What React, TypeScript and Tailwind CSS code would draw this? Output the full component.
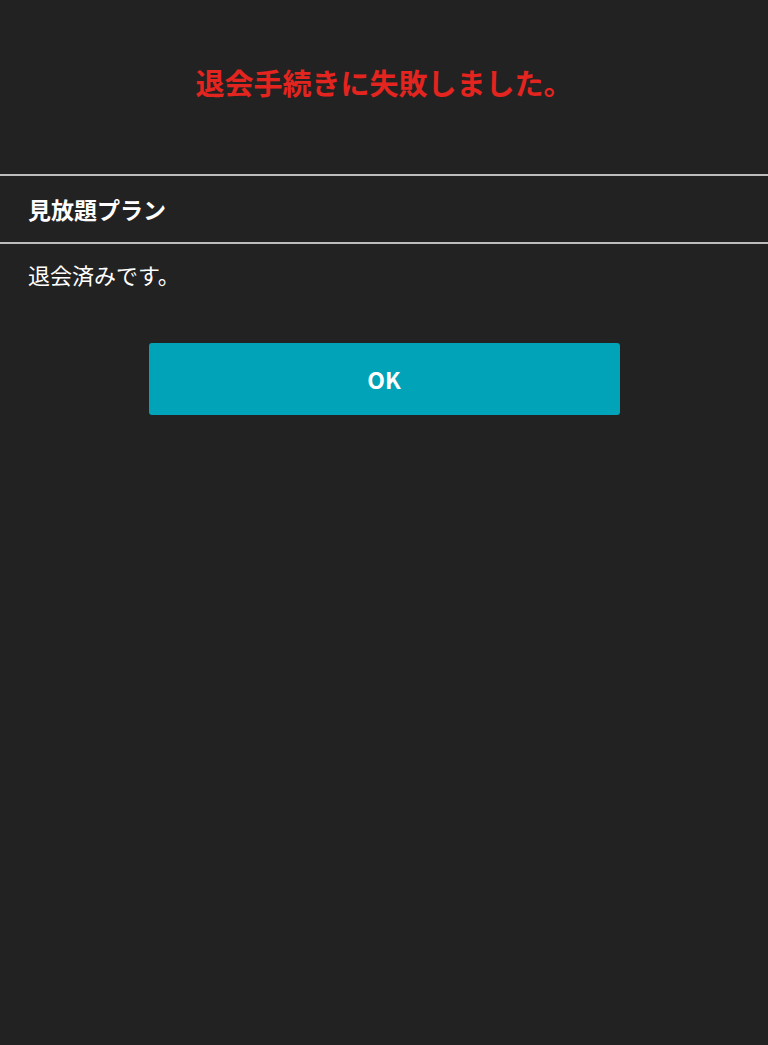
export default function App() {
  return (
    <div
      className="min-h-[1045px] w-full bg-[#222222] text-white"
      style={{ fontFamily: '"Noto Sans CJK JP", "Noto Sans", sans-serif' }}
    >
      <div className="flex h-[174px] items-start justify-center pt-[61px]">
        <h1 className="text-[29px] font-bold leading-[42px] text-[#e3241f]">
          退会手続きに失敗しました。
        </h1>
      </div>
      <div className="border-y-2 border-[#bdbdbd]">
        <h2 className="flex h-[66px] items-center px-[28px] text-[23px] font-bold">
          見放題プラン
        </h2>
      </div>
      <p className="px-[28px] pt-[14px] text-[22px] leading-[32px]">退会済みです。</p>
      <div className="flex justify-center pt-[53px]">
        <button className="h-[72px] w-[471px] rounded-[3px] bg-[#00a3b7] text-[23px] font-bold text-white">
          OK
        </button>
      </div>
    </div>
  );
}
